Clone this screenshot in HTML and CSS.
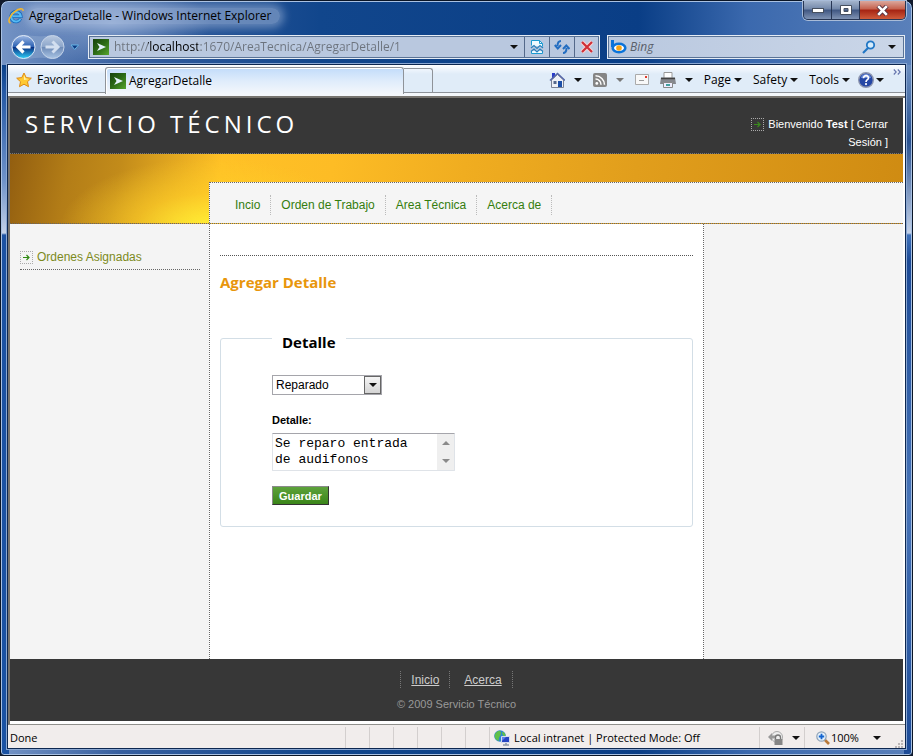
FILE: index.html
```html
<!DOCTYPE html>
<html lang="es">
<head>
<meta charset="utf-8">
<title>AgregarDetalle</title>
<link rel="stylesheet" href="styles.css">
</head>
<body>
<div class="window">
  <header class="titlebar">
    <svg class="icon16" viewBox="0 0 16 16" aria-hidden="true">
      <path d="M12.6 10.6A5 5 0 1 1 13 8.2H4.6" fill="none" stroke="#1667b8" stroke-width="3.4"/>
      <path d="M12.4 10.8A4.8 4.8 0 1 1 12.8 8.2H4.6" fill="none" stroke="#55b9f3" stroke-width="2"/>
      <path d="M2.5 15C-1 14 2 7 7 3.400C11 .4 15.500-.3 15 3" fill="none" stroke="#f4b72b" stroke-width="1.600"/>
    </svg>
    <span class="window-title">AgregarDetalle - Windows Internet Explorer</span>
    <div class="caption-buttons">
      <button class="caption-button" aria-label="Minimize"><svg width="12" height="5" viewBox="0 0 12 5"><rect x=".5" y=".5" width="11" height="4" fill="#fff" stroke="#47505f"/></svg></button>
      <button class="caption-button" aria-label="Maximize"><svg width="12" height="10" viewBox="0 0 12 10"><path d="M.5.5h11v9H.5zM4 3.500v3h4v-3z" fill="#fff" stroke="#47505f" fill-rule="evenodd"/></svg></button>
      <button class="caption-button close" aria-label="Close"><svg width="13" height="11" viewBox="0 0 13 11"><path d="M2 1l9 9M11 1l-9 9" stroke="#5a3340" stroke-width="4.500"/><path d="M2.200 1.200l8.600 8.600M10.800 1.200l-8.600 8.600" stroke="#fff" stroke-width="2.600"/></svg></button>
    </div>
  </header>

  <div class="navbar">
    <svg class="travel" viewBox="0 0 72 28" aria-hidden="true">
      <defs>
        <linearGradient id="back" x2="0" y2="1"><stop offset="0" stop-color="#9fb9e4"/><stop offset=".48" stop-color="#2d62b4"/><stop offset=".52" stop-color="#0a3285"/><stop offset="1" stop-color="#2ed0f8"/></linearGradient>
        <linearGradient id="fwd" x2="0" y2="1"><stop offset="0" stop-color="#b9c9e0"/><stop offset=".5" stop-color="#8ba5ca"/><stop offset=".52" stop-color="#6f8cb8"/><stop offset="1" stop-color="#a9c4e4"/></linearGradient>
      </defs>
      <path d="M14 2C24 2 28 5 43 2A12 12 0 0 1 43 26C28 23 24 26 14 26A12 12 0 0 1 14 2z" fill="#8fa9d0" opacity=".5"/>
      <circle cx="15" cy="14" r="11.500" fill="url(#back)" stroke="#dfe9f7"/>
      <path d="M22 14H10M15 8.500L9.500 14l5.500 5.500" fill="none" stroke="#fff" stroke-width="3.200"/>
      <circle cx="44" cy="14" r="11.500" fill="url(#fwd)" stroke="#c4d3e8"/>
      <path d="M37 14h12M44 8.500l5.500 5.500-5.500 5.500" fill="none" stroke="#d3dff0" stroke-width="3"/>
      <path d="M62.500 12h7.500L66.200 16.500z" fill="#0c3a83" stroke="#67b4e6"/>
    </svg>
    <div class="field address">
      <span class="favicon"><svg viewBox="0 0 16 16"><path d="M4 4l9 4-9 4 2.500-4z" fill="#e4f2fb"/></svg></span>
      <input class="url" aria-label="Address" value="http://localhost:1670/AreaTecnica/AgregarDetalle/1">
      <button class="plain" aria-label="Show address list"><i class="arrow"></i></button>
      <button class="field-button" aria-label="Compatibility view"><svg width="14" height="16" viewBox="0 0 14 16"><path d="M1.500 6.500v-5h8l3 3v3M1.500 12v2.500h11V12" fill="#eefaff" stroke="#1c9ad0"/><path d="M9.500 1.500v3h3" fill="none" stroke="#1c9ad0"/><path d="M1 9l3-2.500L7 9.500l3-3 3 2.500M1 12.500L4 10l3 3 3-3 3 2.500" fill="none" stroke="#2a80bb" stroke-width="1.200"/></svg></button>
      <button class="field-button" aria-label="Refresh"><svg width="16" height="16" viewBox="0 0 16 16"><path d="M7 2C4 2 3.500 4 3.500 7M.8 6l3 3.500L7 6M9 14c3 0 3.500-2 3.500-5M9 10l3.300-3.500L15.500 10" fill="none" stroke="#226dc1" stroke-width="2"/></svg></button>
      <button class="field-button" aria-label="Stop"><svg width="14" height="14" viewBox="0 0 14 14"><path d="M2 2l10 10M12 2L2 12" stroke="#f6d5d7" stroke-width="4"/><path d="M2 2l10 10M12 2L2 12" stroke="#cf3037" stroke-width="2.200"/></svg></button>
    </div>
    <div class="field search">
      <svg class="icon16" viewBox="0 0 16 16" aria-hidden="true"><path d="M1.500 1v7" stroke="#0b73d9" stroke-width="3"/><ellipse cx="8" cy="9" rx="6.300" ry="4.300" fill="#fff" stroke="#0b73d9" stroke-width="2.600"/><circle cx="8" cy="9" r="2.800" fill="#f8a414"/></svg>
      <input class="bing" aria-label="Search" placeholder="Bing">
      <button class="plain" aria-label="Search"><svg width="14" height="14" viewBox="0 0 14 14"><circle cx="8.500" cy="5" r="3.700" fill="#d6ecfb" stroke="#2277c5" stroke-width="1.800"/><path d="M6 8l-5 5" stroke="#2277c5" stroke-width="2.200"/></svg></button>
      <button class="plain" aria-label="Search options"><i class="arrow"></i></button>
    </div>
  </div>

  <div class="client">
    <div class="commandbar">
      <button class="favorites"><svg class="icon16" viewBox="0 0 16 16"><path d="M8 1l2.200 4.600 5.100.6-3.800 3.500 1 5L8 12.200l-4.500 2.500 1-5L.7 6.200l5.100-.6z" fill="#ffc932" stroke="#dd8a17"/><path d="M8 3l1.500 3.500 3 .5L8 8z" fill="#fff2a8"/></svg>Favorites</button>
      <button class="tab"><span class="favicon"><svg viewBox="0 0 16 16"><path d="M4 4l9 4-9 4 2.500-4z" fill="#e4f2fb"/></svg></span>AgregarDetalle</button>
      <button class="newtab" aria-label="New tab"></button>
      <div class="commands">
        <button class="cmd" aria-label="Home"><svg class="icon16" viewBox="0 0 16 16"><path d="M3 1h3v6H3z" fill="#2a3cc8"/><path d="M2.500 8L8.500 2.500 14.500 8v7.500h-12z" fill="#eef1f7" stroke="#7a8295"/><path d="M1 8.500L8.500 1.500 16 8.500" fill="none" stroke="#5566a8" stroke-width="1.400"/><path d="M9 9h4v6H9z" fill="#1c4fa8"/><path d="M4.500 9h3v3h-3z" fill="#56698c"/></svg><i class="arrow"></i></button>
        <button class="cmd" aria-label="Feeds"><svg class="icon14" viewBox="0 0 14 14"><rect width="14" height="14" rx="2" fill="#858585"/><circle cx="3.800" cy="10.400" r="1.400" fill="#fff"/><path d="M2.500 6a5.500 5.500 0 0 1 5.500 5.800M2.500 2.800a9 9 0 0 1 9 9" fill="none" stroke="#fff" stroke-width="1.500"/></svg><i class="arrow dim"></i></button>
        <button class="cmd" aria-label="Read mail"><svg width="14" height="11" viewBox="0 0 14 11"><path d="M.5.5h13v10H.5z" fill="#f8f8f8" stroke="#aaa"/><path d="M10 2h2v2h-2z" fill="#e23b2e"/><path d="M4 6.500h5" stroke="#999"/></svg></button>
        <button class="cmd" aria-label="Print"><svg class="icon16" viewBox="0 0 16 16"><path d="M4 .5h8v6H4z" fill="#fff" stroke="#999"/><path d="M1 5.500h14l1 6.500H0z" fill="#85888e"/><path d="M1 6.500h14" stroke="#444" stroke-width="1.500"/><path d="M3.500 10.500h9v5h-9z" fill="#eef" stroke="#888"/><path d="M6 13h4" stroke="#43a0a0" stroke-width="2"/></svg><i class="arrow"></i></button>
        <button class="cmd text">Page<i class="arrow"></i></button>
        <button class="cmd text">Safety<i class="arrow"></i></button>
        <button class="cmd text">Tools<i class="arrow"></i></button>
        <button class="cmd help" aria-label="Help"><svg class="icon16" viewBox="0 0 16 16"><circle cx="8" cy="8" r="7.300" fill="#2447a5" stroke="#8d96b0" stroke-width="1.400"/><path d="M3 6a5 4 0 0 1 10 0z" fill="#6c8cd8"/><path d="M5.500 6.200C5.500 2.700 10.700 3 10.500 6 10.400 7.800 8 7.600 8 10" fill="none" stroke="#fff" stroke-width="1.700"/><circle cx="8" cy="12.100" r="1.100" fill="#fff"/></svg><i class="arrow"></i></button>
        <button class="cmd more" aria-label="More"><svg width="8" height="6" viewBox="0 0 8 6"><path d="M.8.5L3.200 3 .8 5.500M4.800.5L7.200 3 4.800 5.500" fill="none" stroke="#6473ad" stroke-width="1.100"/></svg></button>
      </div>
    </div>

    <div class="viewport">
      <div class="site">
        <header class="site-header">
          <h1>SERVICIO TÉCNICO</h1>
          <p class="login"><span class="arrow-box"><svg viewBox="0 0 7 7"><path d="M0 3.500h6M3.500 1l2.500 2.500L3.500 6" fill="none" stroke="#3a8a1c" stroke-width="1.200"/></svg></span>Bienvenido <b>Test</b> [ <a href="#">Cerrar Sesión</a> ]</p>
        </header>
        <div class="banner">
          <nav class="menu">
            <a href="#">Incio</a><a href="#">Orden de Trabajo</a><a href="#">Area Técnica</a><a href="#">Acerca de</a>
          </nav>
        </div>
        <div class="columns">
          <nav class="sidebar">
            <a href="#"><span class="arrow-box"><svg viewBox="0 0 7 7"><path d="M0 3.500h6M3.500 1l2.500 2.500L3.500 6" fill="none" stroke="#2f8a10" stroke-width="1.200"/></svg></span>Ordenes Asignadas</a>
          </nav>
          <main class="content">
            <h2>Agregar Detalle</h2>
            <form>
              <fieldset>
                <legend>Detalle</legend>
                <div class="select-wrap">
                  <select aria-label="Estado"><option>Reparado</option></select>
                  <span class="select-button"><i class="arrow"></i></span>
                </div>
                <label for="detalle">Detalle:</label>
                <div class="textarea-wrap">
                  <textarea id="detalle" rows="2" cols="20">Se reparo entrada de audifonos</textarea>
                  <span class="scroll"><i class="arrow up"></i><i class="arrow"></i></span>
                </div>
                <button class="save" type="button">Guardar</button>
              </fieldset>
            </form>
          </main>
          <aside class="extra"></aside>
        </div>
        <footer class="site-footer">
          <nav><a href="#">Inicio</a><a href="#">Acerca</a></nav>
          <p>© 2009 Servicio Técnico</p>
        </footer>
      </div>
    </div>

    <div class="statusbar">
      <span class="pane grow">Done</span>
      <span class="pane slot"></span><span class="pane slot"></span><span class="pane slot"></span><span class="pane slot"></span><span class="pane slot"></span><span class="pane slot"></span>
      <span class="pane zone"><svg class="icon16" viewBox="0 0 16 16"><circle cx="6" cy="6" r="5.800" fill="#2e86cf"/><path d="M1 4c3-4 6-4 6-1S4 7 5 11C2 10 0 8 1 4zM8 2c3 0 4 3 3 4S8 5 8 2z" fill="#5fc04a"/><path d="M7.500 6.500h8v6h-8z" fill="#2744c2" stroke="#d5dcec"/><path d="M8 7h4l-4 4z" fill="#5e82ee"/><path d="M9 15h6M12 13v2" stroke="#8b97a8" stroke-width="1.500"/></svg>Local intranet | Protected Mode: Off</span>
      <span class="pane privacy"><svg class="icon16" viewBox="0 0 16 16"><circle cx="9" cy="7" r="5.500" fill="#eee" stroke="#aaa"/><path d="M0 7l4-4v2.500h4v3H4V11z" fill="#999"/><path d="M7.500 9V7.500a2.500 2.500 0 0 1 5 0V9" fill="none" stroke="#777" stroke-width="1.300"/><path d="M6.500 9h8v6h-8z" fill="#858585"/></svg><i class="arrow"></i></span>
      <span class="pane zoom"><svg class="icon14" viewBox="0 0 14 14"><path d="M8 8l5 5" stroke="#b97a3a" stroke-width="2.600"/><circle cx="5.500" cy="5.500" r="4.700" fill="#e4f1fb" stroke="#8fa3b8" stroke-width="1.200"/><path d="M5.500 2.800v5.400M2.800 5.500h5.400" stroke="#1464cf" stroke-width="1.800"/></svg><span class="zoom-text">100%</span><i class="arrow"></i><svg class="grip" viewBox="0 0 8 8"><path d="M6 0h2v2H6zM6 3h2v2H6zM6 6h2v2H6zM3 3h2v2H3zM3 6h2v2H3zM0 6h2v2H0z" fill="#bbb6b6"/></svg></span>
    </div>
  </div>
</div>
</body>
</html>
```
FILE: styles.css
```css
* { box-sizing: border-box; }

body {
  margin: 0;
  background: #111a2c;
  color: #000;
  font: 12px/16px "Open Sans", "Noto Sans", sans-serif;
}

button, input, select, textarea { font: inherit; color: inherit; margin: 0; }
button { border: 0; padding: 0; background: none; }
h1, h2, p { margin: 0; }
svg { flex: none; display: block; }

.icon16 { width: 16px; height: 16px; }
.icon14 { width: 14px; height: 14px; }

.arrow {
  display: inline-block;
  flex: none;
  border: 4px solid transparent;
  border-top-color: #111;
  border-bottom: 0;
}
.arrow.dim { border-top-color: #777; }
.arrow.up { border-top: 0; border-bottom: 4px solid #8a8a8a; }

/* Window frame */
.window {
  display: flex;
  flex-direction: column;
  min-height: 100vh;
  padding: 0 7px 7px;
  border: 1px solid #0a1526;
  border-radius: 8px 8px 4px 4px;
  box-shadow: inset 0 0 0 1px #a9c1e2;
  background:
    linear-gradient(transparent 64px, #0a4189 64px, #2458a5 90px, #6f93c9 180px, #c3d1e8 232px, #1c52a2 234px, #1a52a3) left / 8px 100% no-repeat,
    linear-gradient(transparent 64px, #6c8fc0 64px, #28508f 140px, #c3d1e8 232px, #3f72bb 234px, #1c4a96 260px, #4774b8 500px, #1c4a96) right / 8px 100% no-repeat,
    radial-gradient(ellipse 100px 40px at 110px 22px, #7f9cca, transparent),
    linear-gradient(90deg, #7594c5, #375f9f 13%, #11468c 35%, #0a3e86 70%, #3b69ae 82%, #5a80ba);
}

.titlebar {
  display: flex;
  align-items: center;
  gap: 5px;
  height: 29px;
}
.window-title {
  padding: 0 8px 0 0;
  border-radius: 8px;
  background: rgb(190 207 232 / 45%);
  box-shadow: 0 0 8px 4px rgb(190 207 232 / 45%);
}
.caption-buttons {
  display: flex;
  align-self: flex-start;
  margin-left: auto;
  margin-right: -1px;
  border: 1px solid #273654;
  border-top: 0;
  border-radius: 0 0 5px 5px;
  box-shadow: 0 0 0 1px #a9bcd8;
  overflow: hidden;
}
.caption-button {
  display: grid;
  place-items: center;
  width: 28px;
  height: 18px;
  border-right: 1px solid #273654;
  background: linear-gradient(#a3b4cc, #7287a9 45%, #3f5682 50%, #8093b3);
}
.caption-button.close {
  width: 45px;
  border-right: 0;
  background: linear-gradient(#dba89d, #c5604c 45%, #a52312 50%, #cf5b3b);
}

.navbar {
  display: flex;
  align-items: center;
  gap: 7px;
  height: 33px;
}
.travel { width: 73px; height: 28px; }
.field {
  display: flex;
  align-items: center;
  height: 24px;
  border: 1px solid #e5ecf5;
  outline: 1px solid #5a7396;
  outline-offset: -2px;
  background: #b9c8df;
}
.address { flex: 1; padding-left: 4px; gap: 5px; }
.search { width: 298px; padding: 0 4px 0 3px; gap: 3px; background: linear-gradient(90deg, #b9c8df, #cad6e8); }
.field input {
  flex: 1;
  min-width: 0;
  height: 20px;
  padding: 0;
  border: 0;
  outline: 0;
  background: none;
}
.field .url {
  background: linear-gradient(90deg, #6c737d 34px, #000 34px, #000 84px, #6c737d 84px);
  background-clip: text;
  color: transparent;
}
.bing::placeholder { color: #5a606a; font-style: italic; opacity: 1; }
.plain { display: grid; place-items: center; width: 16px; height: 20px; }
.search .plain + .plain { margin-left: 4px; }
.field-button {
  display: grid;
  place-items: center;
  width: 25px;
  height: 22px;
  border-left: 1px solid #54698a;
}
.address .field-button { margin-left: -5px; }
.address .plain + .field-button { margin-left: -3px; }

.favicon {
  flex: none;
  width: 16px;
  height: 16px;
  background: linear-gradient(135deg, #17420d, #2c6b16 50%, #57a52d);
}

.client {
  flex: 1;
  display: flex;
  flex-direction: column;
  background: #f1edec;
  box-shadow: 0 0 0 1px #0d2750, 0 0 0 2px #8ba8d2;
  margin-top: 2px;
}

.commandbar {
  display: flex;
  height: 31px;
  padding-top: 2px;
  background: linear-gradient(#fff, #eaf2fb 6px, #e0ecf8 9px, #e0ecf8 27px, #8d9299 27px, #8d9299 28px, #f4f7fb 28px);
}
.favorites, .tab { display: flex; align-items: center; gap: 5px; }
.favorites {
  width: 97px;
  height: 25px;
  padding: 0 0 0 8px;
}
.tab {
  width: 299px;
  height: 27px;
  padding: 0 4px;
  gap: 3px;
  border: 1px solid #8f9399;
  border-bottom: 0;
  border-radius: 3px 3px 0 0;
  background: linear-gradient(#c2dcfa, #dfecfb 50%, #f4f7fb);
  box-shadow: inset 1px 1px #fff;
}
.newtab {
  width: 29px;
  height: 25px;
  margin-top: 1px;
  border: 1px solid #8f9399;
  border-width: 1px 1px 0 0;
  border-radius: 0 3px 0 0;
}
.commands {
  flex: 1;
  display: flex;
  justify-content: flex-end;
  gap: 11px;
  height: 25px;
  padding-right: 4px;
}
.cmd { display: flex; align-items: center; gap: 9px; }
.cmd.text { gap: 3px; }
.cmd.help { gap: 2px; margin-left: -3px; }
.cmd.more { align-items: flex-start; margin-left: -2px; padding-top: 2px; }

/* Web page */
.viewport {
  flex: 1;
  display: flex;
  margin: 0 0 2px;
  padding: 0 2px 3px 0;
  border: 2px solid #77746f;
  border-width: 2px 0 1px 2px;
  border-bottom-color: #8f8f8b;
  background: #fff;
}
.site {
  flex: 1;
  display: flex;
  flex-direction: column;
  background: #f4f4f4;
  font-family: "Liberation Sans", Arial, sans-serif;
}
.site a { text-decoration: none; color: inherit; }

.site-header {
  display: flex;
  justify-content: space-between;
  height: 56px;
  padding: 0 15px;
  border-bottom: 1px dotted #777;
  background: #373737;
  color: #fff;
}
.site-header h1 {
  font: 24px/52px "Open Sans", "Noto Sans", sans-serif;
  letter-spacing: 4px;
}
.login {
  width: 140px;
  padding-top: 17px;
  font-size: 11px;
  line-height: 18px;
  text-align: right;
}
.arrow-box {
  display: inline-grid;
  place-items: center;
  width: 13px;
  height: 13px;
  margin-right: 4px;
  border: 1px dotted #aaa;
}
.arrow-box svg { width: 7px; height: 7px; }

.banner {
  padding: 28px 0 0 199px;
  border-bottom: 1px dotted #666;
  background:
    radial-gradient(ellipse 150px 70px at 200px 74px, #fff035, rgb(255 208 40 / 60%) 50%, transparent),
    linear-gradient(100deg, #925e10, #b37d17 60px, #c28b1a 110px, #ffc126 210px, #fdbc25 320px, #f0ad20 450px, #e19e1c 620px, #cf8b12);
}
.menu {
  display: flex;
  height: 41px;
  padding: 12px 15px;
  border: 1px dotted #666;
  border-width: 1px 0 0 1px;
  background: #f5f5f5;
  color: #347d0e;
}
.menu a {
  height: 20px;
  padding: 2px 10px;
  border-right: 1px dotted #bbb;
}

.columns { flex: 1; display: flex; }
.sidebar { width: 199px; padding: 21px 9px 0 10px; }
.sidebar a {
  display: block;
  padding: 4px 0;
  border-bottom: 1px dotted #666;
  color: #7c8a1c;
}
.extra { width: 199px; }
.content {
  flex: 1;
  padding: 31px 10px 0;
  border: 1px dotted #666;
  border-width: 0 1px;
  background: #fff;
}
.content h2, legend {
  font: bold 15px/20px "Open Sans", "Noto Sans", sans-serif;
}
.content h2 {
  padding-top: 16px;
  border-top: 1px dotted #555;
  color: #e8960c;
}

fieldset {
  margin: 33px 0 0;
  padding: 23px 51px 21px;
  border: 1px solid #d3dee6;
  border-radius: 3px;
}
legend { padding: 7px 10px 0; }
.select-wrap, .textarea-wrap { position: relative; }
.select-wrap { width: 110px; }
select {
  display: block;
  width: 100%;
  height: 20px;
  padding: 0 20px 0 3px;
  border: 1px solid #a5a5ab;
  border-radius: 0;
  background: #fff;
  appearance: none;
}
.select-button {
  position: absolute;
  top: 1px;
  right: 1px;
  display: grid;
  place-items: center;
  width: 17px;
  height: 18px;
  border: 1px solid #666;
  background: linear-gradient(#f5f5f5, #d4d4d4);
  pointer-events: none;
}
label {
  display: block;
  margin: 17px 0 5px;
  font-size: 11px;
  font-weight: bold;
}
.textarea-wrap { width: 183px; }
textarea {
  display: block;
  width: 100%;
  height: 38px;
  padding: 2px 26px 2px 2px;
  border: 1px solid #dfe3e8;
  border-top-color: #a5a5ab;
  border-radius: 1px;
  background: #fff;
  font: 13px/16px "Liberation Mono", "Courier New", monospace;
  resize: none;
  overflow: hidden;
}
.scroll {
  position: absolute;
  inset: 1px 1px 1px auto;
  display: flex;
  flex-direction: column;
  align-items: center;
  justify-content: space-between;
  width: 17px;
  padding: 7px 0;
  background: #efefef;
}
.scroll .arrow { border-top-color: #8a8a8a; }
.save {
  display: block;
  height: 19px;
  margin-top: 15px;
  padding: 0 6px;
  border: 1px solid #333;
  border-color: #8a8a8a #333 #333 #8a8a8a;
  background: linear-gradient(#5da23b, #3a8519);
  color: #fff;
  font-size: 11px;
  font-weight: bold;
}

.site-footer {
  padding: 12px 0 9px;
  background: #373737;
  color: #999;
  font-size: 11px;
  text-align: center;
}
.site-footer nav {
  display: flex;
  justify-content: center;
  margin-bottom: 8px;
  color: #ccc;
  font-size: 12px;
}
.site-footer nav a {
  padding: 1px 10px 0;
  border-right: 1px dotted #777;
  text-decoration: underline;
}
.site-footer nav a:first-child { border-left: 1px dotted #777; }
.site-footer nav a + a { padding-left: 14px; }

/* Status bar */
.statusbar { display: flex; height: 21px; font-size: 11px; }
.pane {
  display: flex;
  align-items: center;
  gap: 4px;
  border-left: 1px solid #d3cfce;
  white-space: nowrap;
}
.pane.grow { flex: 1; padding-left: 2px; border-left: 0; }
.slot { width: 24px; }
.zone { width: 270px; padding-left: 4px; }
.privacy { width: 45px; padding-left: 8px; gap: 8px; }
.zoom { width: 101px; padding-left: 11px; gap: 1px; }
.zoom-text { flex: 1; }
.zoom .arrow { margin-right: 11px; }
.grip { width: 8px; height: 8px; align-self: flex-end; margin: 0 2px; }
```
